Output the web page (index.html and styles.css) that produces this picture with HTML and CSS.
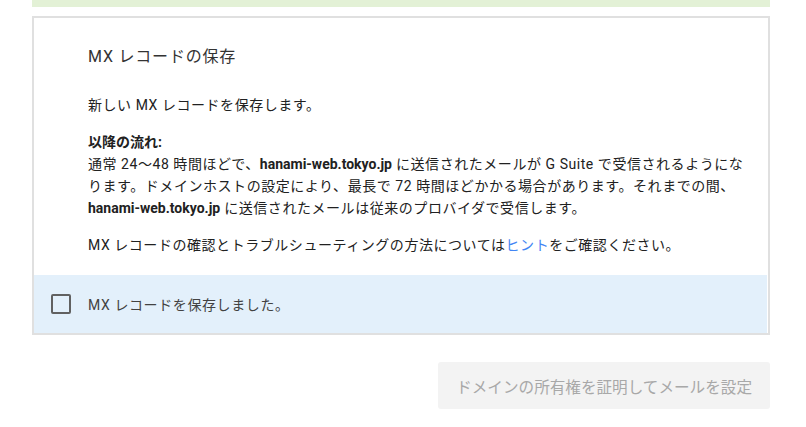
FILE: index.html
```html
<!DOCTYPE html>
<html lang="ja">
<head>
<meta charset="utf-8">
<link rel="stylesheet" href="styles.css">
</head>
<body>
<div class="page">
  <div class="banner"></div>
  <div class="card">
    <div class="card-body">
      <h2 class="title">MX レコードの保存</h2>
      <p>新しい MX レコードを保存します。</p>
      <p><strong>以降の流れ:</strong><br>通常 24～48 時間ほどで、<strong>hanami-web.tokyo.jp</strong> に送信されたメールが G Suite で受信されるようになります。ドメインホストの設定により、最長で 72 時間ほどかかる場合があります。それまでの間、<strong>hanami-web.tokyo.jp</strong> に送信されたメールは従来のプロバイダで受信します。</p>
      <p class="last">MX レコードの確認とトラブルシューティングの方法については<a href="#" class="link">ヒント</a>をご確認ください。</p>
    </div>
    <label class="confirm">
      <span class="checkbox"></span>
      <span class="confirm-text">MX レコードを保存しました。</span>
    </label>
  </div>
  <div class="actions">
    <button class="btn" disabled>ドメインの所有権を証明してメールを設定</button>
  </div>
</div>
</body>
</html>
```
FILE: styles.css
```css
html, body {
  margin: 0;
  background: #ffffff;
}
body {
  font-family: Roboto, "Noto Sans CJK JP", sans-serif;
  color: #212121;
  font-size: 14px;
}
.page {
  padding: 0 36px 0 32px;
}
.banner {
  height: 7px;
  background: #e3f1d6;
}
.card {
  margin-top: 9px;
  border: 2px solid #e0e0e0;
  background: #fff;
}
.card-body {
  padding: 27px 14px 19px 54px;
}
.title {
  margin: 0 0 25px;
  font-size: 16px;
  line-height: 24px;
  font-weight: 400;
  letter-spacing: 0.8px;
  color: #333;
}
.card-body p {
  margin: 0 0 15px;
  font-size: 14px;
  line-height: 22px;
  letter-spacing: 0.55px;
}
.card-body p.last {
  margin-bottom: 0;
}
.card-body strong {
  font-weight: 700;
  letter-spacing: 0;
}
.link {
  color: #4285f4;
  text-decoration: none;
}
.confirm {
  display: flex;
  align-items: center;
  gap: 17px;
  height: 58px;
  padding-left: 17px;
  margin-right: 1px;
  background: #e3f0fb;
}
.checkbox {
  box-sizing: border-box;
  width: 20px;
  height: 20px;
  border: 2px solid #616161;
  border-radius: 2px;
}
.confirm-text {
  font-size: 14px;
  letter-spacing: 0.6px;
  color: #424242;
}
.actions {
  display: flex;
  justify-content: flex-end;
  margin-top: 27px;
}
.btn {
  height: 47px;
  padding: 0 18px;
  border: none;
  border-radius: 3px;
  background: #f3f3f3;
  color: #a8a8a8;
  font-family: Roboto, "Noto Sans CJK JP", sans-serif;
  font-size: 15.6px;
}
```
